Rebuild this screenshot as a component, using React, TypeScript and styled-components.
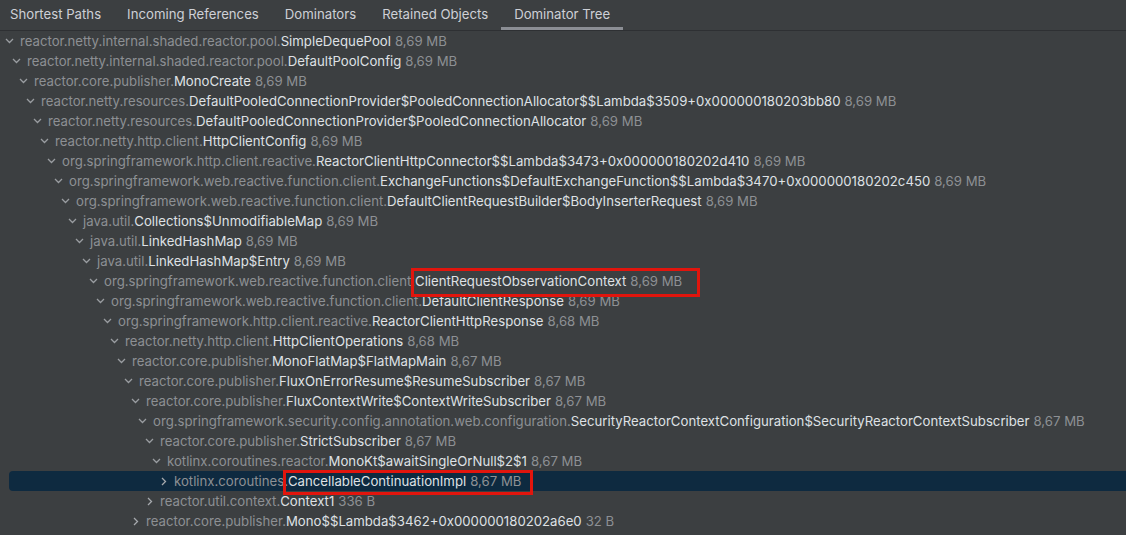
import React from "react";
import styled, {createGlobalStyle} from "styled-components";

const Global = createGlobalStyle`
    html, body {
        margin: 0;
        padding: 0;
        background: #3c3f41;
    }
    body {
        font-family: Inter, "Noto Sans", sans-serif;
        -webkit-font-smoothing: antialiased;
    }
`;

const Page = styled.div`
    width: 1126px;
    height: 535px;
    overflow: hidden;
    background: #3c3f41;
`;

const TabBar = styled.div`
    display: flex;
    height: 31px;
    border-bottom: 1px solid #2e3033;
    box-sizing: border-box;
    margin-left: -3px;
`;

const Tab = styled.div<{active?: boolean}>`
    display: flex;
    align-items: center;
    padding: 1px 13px 0;
    font-size: 13.2px;
    color: #ced0d6;
    border-bottom: 3px solid ${p => p.active ? "#8b8e94" : "transparent"};
    white-space: nowrap;
`;

const Tree = styled.div`
    display: flex;
    flex-direction: column;
`;

const SEL_INSET = 9;

const Row = styled.div<{level: number; selected?: boolean}>`
    display: flex;
    align-items: center;
    height: 20px;
    padding-left: ${p => 4 + p.level * 7 - (p.selected ? SEL_INSET : 0)}px;
    margin-left: ${p => p.selected ? SEL_INSET : 0}px;
    background: ${p => p.selected ? "#0e2a40" : "transparent"};
    border-radius: 4px 0 0 4px;
    font-size: 13.2px;
    white-space: nowrap;
`;

const Chevron = styled.span`
    display: flex;
    width: 15px;
    padding-left: 1px;
`;

const Pkg = styled.span`
    color: #8d9094;
`;

const Cls = styled.span`
    color: #dfe1e5;
`;

const Size = styled.span`
    color: #8d9094;
    margin-left: 4px;
`;

interface Box {
    t: number;
    r: number;
    b: number;
    l: number;
}

const Mark = styled.span<{box: Box}>`
    position: relative;
    &::after {
        content: "";
        position: absolute;
        top: -${p => p.box.t}px;
        right: -${p => p.box.r}px;
        bottom: -${p => p.box.b}px;
        left: -${p => p.box.l}px;
        border: 3px solid #e1150d;
        pointer-events: none;
    }
`;

const Down = () => (
    <svg width="9" height="6" viewBox="0 0 9 6">
        <path d="M1 1l3.5 3.5L8 1" fill="none" stroke="#9a9da1" strokeWidth="1.3"/>
    </svg>
);

const Right = () => (
    <svg width="8" height="9" viewBox="0 0 8 9">
        <path d="M3 1l3.5 3.5L3 8" fill="none" stroke="#a6a9ad" strokeWidth="1.3"/>
    </svg>
);

interface Node {
    level: number;
    open: boolean;
    pkg: string;
    cls: string;
    size: string;
    box?: Box;
    selected?: boolean;
}

const wrf = "org.springframework.web.reactive.function.client.";
const rcp = "reactor.core.publisher.";

const nodes: Node[] = [
    {level: 0, open: true, pkg: "reactor.netty.internal.shaded.reactor.pool.", cls: "SimpleDequePool", size: "8,69 MB"},
    {level: 1, open: true, pkg: "reactor.netty.internal.shaded.reactor.pool.", cls: "DefaultPoolConfig", size: "8,69 MB"},
    {level: 2, open: true, pkg: rcp, cls: "MonoCreate", size: "8,69 MB"},
    {level: 3, open: true, pkg: "reactor.netty.resources.", cls: "DefaultPooledConnectionProvider$PooledConnectionAllocator$$Lambda$3509+0x000000180203bb80", size: "8,69 MB"},
    {level: 4, open: true, pkg: "reactor.netty.resources.", cls: "DefaultPooledConnectionProvider$PooledConnectionAllocator", size: "8,69 MB"},
    {level: 5, open: true, pkg: "reactor.netty.http.client.", cls: "HttpClientConfig", size: "8,69 MB"},
    {level: 6, open: true, pkg: "org.springframework.http.client.reactive.", cls: "ReactorClientHttpConnector$$Lambda$3473+0x000000180202d410", size: "8,69 MB"},
    {level: 7, open: true, pkg: wrf, cls: "ExchangeFunctions$DefaultExchangeFunction$$Lambda$3470+0x000000180202c450", size: "8,69 MB"},
    {level: 8, open: true, pkg: wrf, cls: "DefaultClientRequestBuilder$BodyInserterRequest", size: "8,69 MB"},
    {level: 9, open: true, pkg: "java.util.", cls: "Collections$UnmodifiableMap", size: "8,69 MB"},
    {level: 10, open: true, pkg: "java.util.", cls: "LinkedHashMap", size: "8,69 MB"},
    {level: 11, open: true, pkg: "java.util.", cls: "LinkedHashMap$Entry", size: "8,69 MB"},
    {level: 12, open: true, pkg: wrf, cls: "ClientRequestObservationContext", size: "8,69 MB", box: {t: 5, r: 18, b: 8, l: 4}},
    {level: 13, open: true, pkg: wrf, cls: "DefaultClientResponse", size: "8,69 MB"},
    {level: 14, open: true, pkg: "org.springframework.http.client.reactive.", cls: "ReactorClientHttpResponse", size: "8,68 MB"},
    {level: 15, open: true, pkg: "reactor.netty.http.client.", cls: "HttpClientOperations", size: "8,68 MB"},
    {level: 16, open: true, pkg: rcp, cls: "MonoFlatMap$FlatMapMain", size: "8,67 MB"},
    {level: 17, open: true, pkg: rcp, cls: "FluxOnErrorResume$ResumeSubscriber", size: "8,67 MB"},
    {level: 18, open: true, pkg: rcp, cls: "FluxContextWrite$ContextWriteSubscriber", size: "8,67 MB"},
    {level: 19, open: true, pkg: "org.springframework.security.config.annotation.web.configuration.", cls: "SecurityReactorContextConfiguration$SecurityReactorContextSubscriber", size: "8,67 MB"},
    {level: 20, open: true, pkg: rcp, cls: "StrictSubscriber", size: "8,67 MB"},
    {level: 21, open: true, pkg: "kotlinx.coroutines.reactor.", cls: "MonoKt$awaitSingleOrNull$2$1", size: "8,67 MB"},
    {level: 22, open: false, pkg: "kotlinx.coroutines.", cls: "CancellableContinuationImpl", size: "8,67 MB", box: {t: 3, r: 12, b: 6, l: 5}, selected: true},
    {level: 20, open: false, pkg: "reactor.util.context.", cls: "Context1", size: "336 B"},
    {level: 18, open: false, pkg: rcp, cls: "Mono$$Lambda$3462+0x000000180202a6e0", size: "32 B"},
];

const tabs = ["Shortest Paths", "Incoming References", "Dominators", "Retained Objects", "Dominator Tree"];

const App = () => {
    return (
        <Page>
            <Global/>
            <TabBar>
                {tabs.map(t => <Tab key={t} active={t === "Dominator Tree"}>{t}</Tab>)}
            </TabBar>
            <Tree>
                {nodes.map((n, i) => {
                    const body = (
                        <>
                            <Cls>{n.cls}</Cls>
                            <Size>{n.size}</Size>
                        </>
                    );
                    return (
                        <Row key={i} level={n.level} selected={n.selected}>
                            <Chevron>{n.open ? <Down/> : <Right/>}</Chevron>
                            <Pkg>{n.pkg}</Pkg>
                            {n.box ? <Mark box={n.box}>{body}</Mark> : body}
                        </Row>
                    );
                })}
            </Tree>
        </Page>
    );
};

export default App;
